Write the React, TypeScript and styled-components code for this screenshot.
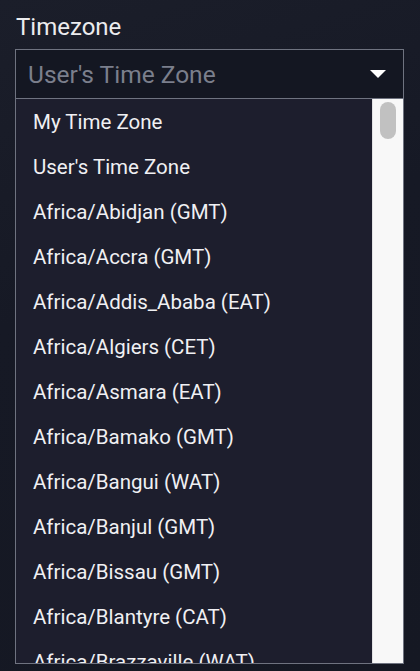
import styled, { createGlobalStyle } from "styled-components";

const zones = [
  "My Time Zone",
  "User's Time Zone",
  "Africa/Abidjan (GMT)",
  "Africa/Accra (GMT)",
  "Africa/Addis_Ababa (EAT)",
  "Africa/Algiers (CET)",
  "Africa/Asmara (EAT)",
  "Africa/Bamako (GMT)",
  "Africa/Bangui (WAT)",
  "Africa/Banjul (GMT)",
  "Africa/Bissau (GMT)",
  "Africa/Blantyre (CAT)",
  "Africa/Brazzaville (WAT)",
  "Africa/Bujumbura (CAT)",
];

export default function App() {
  return (
    <>
      <GlobalStyle />
      <Page>
        <Label>Timezone</Label>
        <Select>
          <Placeholder>User's Time Zone</Placeholder>
          <Caret viewBox="0 0 16 8">
            <path d="M0 0 L16 0 L8 8 Z" fill="#ffffff" />
          </Caret>
        </Select>
        <Dropdown>
          <Options>
            {zones.map((zone) => (
              <Option key={zone}>{zone}</Option>
            ))}
          </Options>
          <Track>
            <Thumb />
          </Track>
        </Dropdown>
      </Page>
    </>
  );
}

const GlobalStyle = createGlobalStyle`
  html, body {
    margin: 0;
    background: #161925;
  }
  body {
    font-family: Roboto, "Liberation Sans", sans-serif;
  }
`;

const Page = styled.div`
  height: 671px;
  padding: 13px 16px 0 15px;
  box-sizing: border-box;
  overflow: hidden;
  display: flex;
  flex-direction: column;
  background: linear-gradient(160deg, #1b1e2a 0%, #161925 40%, #151823 100%);
`;

const Label = styled.div`
  font-size: 24px;
  color: #ececee;
  line-height: 28px;
  margin: 0 0 8px 1px;
`;

const Select = styled.div`
  height: 50px;
  box-sizing: border-box;
  border: 1.5px solid #6f7380;
  background: #141722;
  display: flex;
  align-items: center;
  justify-content: space-between;
  padding: 0 17px 0 12px;
`;

const Placeholder = styled.span`
  font-size: 24.5px;
  color: #7b7f8c;
`;

const Caret = styled.svg`
  width: 16px;
  height: 8px;
`;

const Dropdown = styled.div`
  height: 565px;
  box-sizing: border-box;
  border: 1.5px solid #6f7380;
  border-top: none;
  background: #1d1e2d;
  display: flex;
  overflow: hidden;
`;

const Options = styled.ul`
  flex: 1;
  list-style: none;
  margin: 0;
  padding: 0;
  overflow: hidden;
`;

const Option = styled.li`
  height: 45px;
  display: flex;
  align-items: center;
  padding-left: 17px;
  font-size: 20.5px;
  color: #f0f0f3;
  white-space: nowrap;
`;

const Track = styled.div`
  width: 31px;
  flex-shrink: 0;
  background: #f8f8f8;
  border-left: 1px solid #e2e2e4;
  box-sizing: border-box;
  padding: 3px 7px 0 7px;
`;

const Thumb = styled.div`
  height: 37px;
  border-radius: 8px;
  background: #c1c1c1;
`;
